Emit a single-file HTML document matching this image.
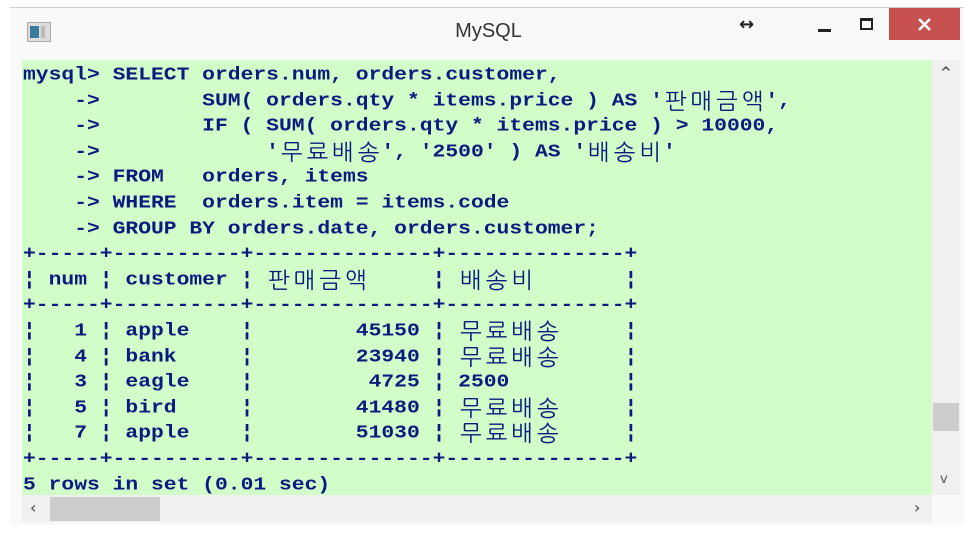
<!DOCTYPE html>
<html><head><meta charset="utf-8"><style>
body{margin:0;width:977px;height:534px;background:#fff;position:relative;overflow:hidden}
.win{position:absolute;left:10px;top:7px;width:954px;height:517px;background:#f9f9f9;border-top:1px solid #d0d0d0}
.title{position:absolute;left:0;width:977px;top:20px;text-align:center;font:20px "Liberation Sans",sans-serif;color:#333}
.close{position:absolute;left:889px;top:8px;width:71px;height:32px;background:#c75050}
.green{position:absolute;left:22px;top:60px;width:910px;height:435px;background:#d2fcc8}
.vs{position:absolute;left:932px;top:60px;width:28px;height:435px;background:#f0f0f0}
.hs{position:absolute;left:22px;top:495px;width:910px;height:27px;background:#f0f0f0}
.t{position:absolute;left:0;top:2px;width:977px;height:500px}
.l{position:absolute;left:23px;height:25.6px;font:bold 21.33px/25.6px "Liberation Mono",monospace;color:#0a1a80;white-space:pre;transform:scaleY(0.85);transform-origin:left center}
.k{display:inline-block;width:25.6px;height:25.6px;line-height:25.6px;vertical-align:top;font:23px/25.6px "Liberation Sans","NanumGothic",sans-serif;text-align:center;transform:scaleY(1.15)}
</style></head><body>
<div class="win"></div>
<svg style="position:absolute;left:27px;top:22px" width="24" height="20"><rect x="0.5" y="0.5" width="23" height="19" fill="#ddd" stroke="#aaa"/><rect x="3" y="4" width="9" height="12" fill="#3a7a9a"/><rect x="14" y="4" width="4" height="12" fill="#bbb"/></svg>
<div class="title">MySQL</div>
<div style="position:absolute;left:739px;top:14px;font:bold 18px 'DejaVu Sans',sans-serif;color:#222">↔</div>
<div style="position:absolute;left:818px;top:29px;width:13px;height:3px;background:#222"></div>
<div style="position:absolute;left:860px;top:18px;width:13px;height:12px;border:2px solid #222;border-top-width:3px;box-sizing:border-box"></div>
<div class="close"><svg width="71" height="32"><path d="M30 11 L41 22 M41 11 L30 22" stroke="#fff" stroke-width="2.5"/></svg></div>
<div class="green"></div>
<div class="vs"><div style="position:absolute;left:1px;top:343px;width:26px;height:28px;background:#cdcdcd"></div>
<div style="position:absolute;left:8px;top:5px;color:#555;font:bold 14px 'DejaVu Sans'">^</div>
<div style="position:absolute;left:8px;top:412px;color:#555;font:13px 'DejaVu Sans'">v</div></div>
<div class="hs"><div style="position:absolute;left:28px;top:2px;width:110px;height:24px;background:#cdcdcd"></div>
<div style="position:absolute;left:8px;top:3px;color:#444;font:16px 'DejaVu Sans'">‹</div>
<div style="position:absolute;left:892px;top:3px;color:#444;font:16px 'DejaVu Sans'">›</div></div>
<div class="t">
<div class="l" style="top:61px">mysql&gt; SELECT orders.num, orders.customer,</div>
<div class="l" style="top:86.6px">    -&gt;        SUM( orders.qty * items.price ) AS '<span class="k">판</span><span class="k">매</span><span class="k">금</span><span class="k">액</span>',</div>
<div class="l" style="top:112.2px">    -&gt;        IF ( SUM( orders.qty * items.price ) &gt; 10000,</div>
<div class="l" style="top:137.8px">    -&gt;             '<span class="k">무</span><span class="k">료</span><span class="k">배</span><span class="k">송</span>', '2500' ) AS '<span class="k">배</span><span class="k">송</span><span class="k">비</span>'</div>
<div class="l" style="top:163.4px">    -&gt; FROM   orders, items</div>
<div class="l" style="top:189px">    -&gt; WHERE  orders.item = items.code</div>
<div class="l" style="top:214.6px">    -&gt; GROUP BY orders.date, orders.customer;</div>
<div class="l" style="top:240.2px">+-----+----------+--------------+--------------+</div>
<div class="l" style="top:265.8px">¦ num ¦ customer ¦ <span class="k">판</span><span class="k">매</span><span class="k">금</span><span class="k">액</span>     ¦ <span class="k">배</span><span class="k">송</span><span class="k">비</span>       ¦</div>
<div class="l" style="top:291.4px">+-----+----------+--------------+--------------+</div>
<div class="l" style="top:317px">¦   1 ¦ apple    ¦        45150 ¦ <span class="k">무</span><span class="k">료</span><span class="k">배</span><span class="k">송</span>     ¦</div>
<div class="l" style="top:342.6px">¦   4 ¦ bank     ¦        23940 ¦ <span class="k">무</span><span class="k">료</span><span class="k">배</span><span class="k">송</span>     ¦</div>
<div class="l" style="top:368.2px">¦   3 ¦ eagle    ¦         4725 ¦ 2500         ¦</div>
<div class="l" style="top:393.8px">¦   5 ¦ bird     ¦        41480 ¦ <span class="k">무</span><span class="k">료</span><span class="k">배</span><span class="k">송</span>     ¦</div>
<div class="l" style="top:419.4px">¦   7 ¦ apple    ¦        51030 ¦ <span class="k">무</span><span class="k">료</span><span class="k">배</span><span class="k">송</span>     ¦</div>
<div class="l" style="top:445px">+-----+----------+--------------+--------------+</div>
<div class="l" style="top:470.6px">5 rows in set (0.01 sec)</div>
</div>
</body></html>
